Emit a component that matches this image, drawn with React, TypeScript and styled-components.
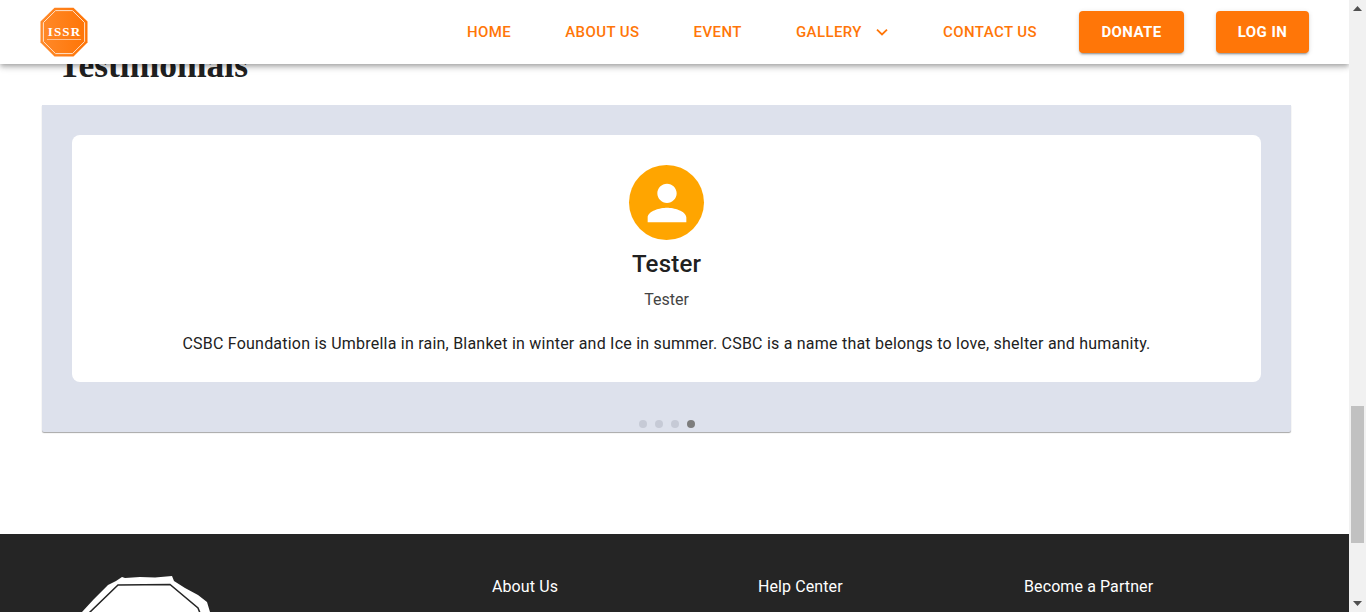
import React from "react";
import styled, { createGlobalStyle } from "styled-components";

const Global = createGlobalStyle`
  html, body { margin: 0; padding: 0; height: 612px; overflow: hidden; background: #fff; }
  * { box-sizing: border-box; }
  body { font-family: Roboto, "Liberation Sans", sans-serif; color: #212121; }
`;

const Shell = styled.div`
  display: grid;
  grid-template-columns: 1349px 17px;
  height: 612px;
  overflow: hidden;
`;

const Page = styled.div`
  position: relative;
  height: 612px;
  overflow: hidden;
`;

const Header = styled.header`
  position: absolute;
  top: 0;
  left: 0;
  right: 0;
  z-index: 5;
  height: 64px;
  background: #fff;
  display: flex;
  align-items: center;
  justify-content: space-between;
  padding: 0 40px;
  box-shadow: 0 2px 4px -1px rgba(0,0,0,.2), 0 4px 5px 0 rgba(0,0,0,.14), 0 1px 10px 0 rgba(0,0,0,.12);
`;

const LogoMark = styled.svg`
  width: 48px;
  height: 50px;
  display: block;
`;

const Nav = styled.nav`
  display: flex;
  align-items: center;
`;

const NavLink = styled.a`
  font-size: 15px;
  font-weight: 500;
  line-height: 20px;
  color: #ff7608;
  letter-spacing: 0.42px;
  margin-right: 54px;
  white-space: nowrap;
  display: flex;
  align-items: center;
  &:last-of-type { margin-right: 42px; }
`;

const Chevron = styled.svg`
  width: 14px;
  height: 14px;
  margin-left: 13px;
`;

const ActionButton = styled.button<{ $w: number; $gap?: number }>`
  width: ${(p) => p.$w}px;
  height: 42px;
  margin-right: ${(p) => p.$gap ?? 0}px;
  border: 0;
  border-radius: 4px;
  background: #ff7608;
  color: #fff;
  font-family: Roboto, sans-serif;
  font-size: 15px;
  font-weight: 700;
  letter-spacing: 0.42px;
  box-shadow: 0 3px 1px -2px rgba(0,0,0,.2), 0 2px 2px 0 rgba(0,0,0,.14), 0 1px 5px 0 rgba(0,0,0,.12);
`;

const Heading = styled.h2`
  margin: 0;
  padding: 46px 0 0 58px;
  height: 105px;
  font-family: "Liberation Serif", serif;
  font-size: 35.5px;
  line-height: 38px;
  font-weight: 700;
  color: #212121;
`;

const Panel = styled.section`
  margin: 0 58px 0 42px;
  height: 327px;
  background: #dde1ec;
  padding: 30px 30px 0;
  display: flex;
  flex-direction: column;
  border-radius: 0 0 2px 2px;
  box-shadow: 0 1px 1px rgba(0,0,0,.35);
`;

const Card = styled.article`
  flex: none;
  height: 247px;
  background: #fff;
  border-radius: 8px;
  display: flex;
  flex-direction: column;
  align-items: center;
  padding-top: 30px;
`;

const Avatar = styled.div`
  width: 75px;
  height: 75px;
  border-radius: 50%;
  background: #ffa500;
  display: flex;
  align-items: center;
  justify-content: center;
`;

const Name = styled.h3`
  margin: 9px 0 0;
  font-size: 24px;
  line-height: 30px;
  font-weight: 500;
  letter-spacing: 0.2px;
  color: #212121;
`;

const Role = styled.div`
  margin-top: 11px;
  font-size: 16px;
  line-height: 20px;
  color: #444;
`;

const Quote = styled.p`
  margin: 24px 0 0;
  font-size: 16px;
  line-height: 20px;
  letter-spacing: 0.22px;
  color: #212121;
`;

const Dots = styled.div`
  display: flex;
  justify-content: center;
  gap: 8px;
  margin-top: 38px;
`;

const Dot = styled.span<{ $on?: boolean }>`
  width: 8px;
  height: 8px;
  border-radius: 50%;
  background: ${(p) => (p.$on ? "#7d7d7d" : "#c6cad6")};
`;

const Footer = styled.footer`
  margin-top: 102px;
  height: 78px;
  background: #252525;
  display: grid;
  grid-template-columns: 492px 266px 266px 1fr;
  color: #fff;
  overflow: hidden;
`;

const FooterLogo = styled.svg`
  margin: 41px 0 0 80px;
  width: 132px;
  height: 140px;
  display: block;
`;

const FooterTitle = styled.div`
  padding-top: 43px;
  font-size: 16px;
  line-height: 20px;
  letter-spacing: 0.1px;
`;

const Scrollbar = styled.aside`
  background: #f1f1f1;
  height: 612px;
  display: flex;
  flex-direction: column;
  align-items: center;
  padding-top: 6px;
`;

const ArrowGlyph = styled.svg`
  width: 9px;
  height: 5px;
  display: block;
  flex: none;
`;

const Thumb = styled.div`
  width: 13px;
  height: 137px;
  margin-top: 395px;
  background: #c1c1c1;
  flex: none;
`;

const Spacer = styled.div`
  flex: 1;
`;

const BottomArrow = styled(ArrowGlyph)`
  margin-bottom: 6px;
`;

export default function App() {
  return (
    <Shell>
      <Global />
      <Page>
        <Header>
          <LogoMark viewBox="0 0 48 50">
            <defs>
              <linearGradient id="lg" x1="0" x2="1" y1="0" y2="0">
                <stop offset="0" stopColor="#ff8a2a" />
                <stop offset="1" stopColor="#ff7405" />
              </linearGradient>
            </defs>
            <path d="M14.5 0.8 L33.5 0.8 L47.5 14.5 L47.5 35.5 L33.5 49.5 L14.5 49.5 L0.5 35.5 L0.5 14.5 Z" fill="url(#lg)" />
            <path d="M15.5 3.6 L32.5 3.6 L44.6 15.6 L44.6 34.5 L32.5 46.6 L15.5 46.6 L3.4 34.5 L3.4 15.6 Z" fill="none" stroke="#ffe3cc" strokeWidth="1" />
            <text x="24.5" y="29" textAnchor="middle" fontFamily="Liberation Serif, serif" fontWeight="700" fontSize="13" letterSpacing="1.2" fill="#fff">ISSR</text>
            <rect x="7" y="32" width="34" height="1" fill="#ffc08e" />
          </LogoMark>
          <Nav>
            <NavLink>HOME</NavLink>
            <NavLink>ABOUT US</NavLink>
            <NavLink>EVENT</NavLink>
            <NavLink>
              GALLERY
              <Chevron viewBox="0 0 14 14" fill="none" stroke="#ff7608" strokeWidth="1.8">
                <path d="M2 4.6 L7 9.4 L12 4.6" />
              </Chevron>
            </NavLink>
            <NavLink>CONTACT US</NavLink>
            <ActionButton $w={105} $gap={32}>DONATE</ActionButton>
            <ActionButton $w={93}>LOG IN</ActionButton>
          </Nav>
        </Header>
        <Heading>Testimonials</Heading>
        <Panel>
          <Card>
            <Avatar>
              <svg width="58" height="58" viewBox="0 0 24 24" fill="#fff">
                <path d="M12 12c2.21 0 4-1.79 4-4s-1.79-4-4-4-4 1.79-4 4 1.79 4 4 4zm0 2c-2.67 0-8 1.34-8 4v2h16v-2c0-2.66-5.33-4-8-4z" />
              </svg>
            </Avatar>
            <Name>Tester</Name>
            <Role>Tester</Role>
            <Quote>CSBC Foundation is Umbrella in rain, Blanket in winter and Ice in summer. CSBC is a name that belongs to love, shelter and humanity.</Quote>
          </Card>
          <Dots>
            <Dot />
            <Dot />
            <Dot />
            <Dot $on />
          </Dots>
        </Panel>
        <Footer>
          <div>
            <FooterLogo viewBox="0 0 132 140">
              <path d="M0 40 L2 37 L14 24 L28 10 L36 6 L42 2 L45 3 L60 2 L75 2.5 L92 1 L94 6 L105 13 L118 20 L127 27 L130 37 L130 140 L0 140 Z" fill="#fff" />
              <path d="M9 38 L38 10 L90 9.5 L118 33 L120 38" fill="none" stroke="#252525" strokeWidth="1.5" />
            </FooterLogo>
          </div>
          <FooterTitle>About Us</FooterTitle>
          <FooterTitle>Help Center</FooterTitle>
          <FooterTitle>Become a Partner</FooterTitle>
        </Footer>
      </Page>
      <Scrollbar>
        <ArrowGlyph viewBox="0 0 9 5"><path d="M4.5 0 L9 5 L0 5 Z" fill="#505050" /></ArrowGlyph>
        <Thumb />
        <Spacer />
        <BottomArrow viewBox="0 0 9 5"><path d="M0 0 L9 0 L4.5 5 Z" fill="#505050" /></BottomArrow>
      </Scrollbar>
    </Shell>
  );
}
